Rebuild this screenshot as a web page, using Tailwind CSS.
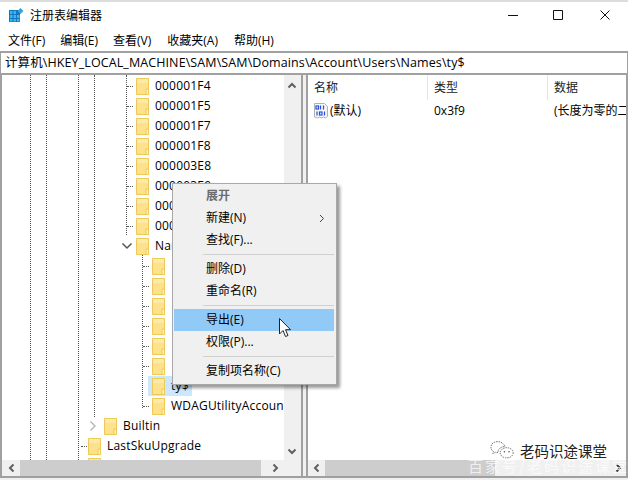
<!DOCTYPE html>
<html lang="zh">
<head>
<meta charset="utf-8">
<script src="https://cdn.jsdelivr.net/npm/@tailwindcss/browser@4"></script>
</head>
<body class="w-[628px] h-[480px] overflow-hidden bg-white text-[12px] text-black font-['Open_Sans','Noto_Sans_CJK_SC',sans-serif]">
<svg class="hidden"><defs>
<symbol id="f" viewBox="0 0 13 17"><path d="M.5.5h12v16H.5z" fill="#fde18d" stroke="#eec955"/><path d="M1 1h11v4H1z" fill="#fdeaa9"/><path d="M10 11h2.500v5.500H10z" fill="#fff1bd" stroke="#eec955"/></symbol>
</defs></svg>
<div class="relative w-[628px] h-[480px] flex flex-col bg-[#f0f0f0] border-t-2 border-[#dcdcdc]">
  <!-- title bar -->
  <div class="h-[28px] bg-white flex items-center shrink-0">
    <svg class="ml-[9px] mt-[-1px]" width="15" height="15" viewBox="0 0 15 15">
      <path d="M0 2h11v12H0z" fill="#1576b8"/>
      <path d="M1 3h2.500v3H1zM4.500 3H7v3H4.500zM1 7h2.500v3H1zM4.500 7H7v3H4.500zM8 7h2.500v3H8zM1 11h2.500v2.500H1zM4.500 11H7v2.500H4.500zM8 11h2.500v2.500H8z" fill="#35b7f3"/>
      <path d="M11.500 0l3 3-3 3-3-3z" fill="#35a5e0"/>
    </svg>
    <span class="ml-[6px] text-[12px]">注册表编辑器</span>
    <div class="ml-auto flex items-center mt-[-2px]">
      <svg width="10" height="10" viewBox="0 0 10 10" class="mr-[35px]"><path d="M0 5.500h10" stroke="#111"/></svg>
      <svg width="10" height="10" viewBox="0 0 10 10" class="mr-[37px]"><path d="M.5.500h9v9h-9z" fill="none" stroke="#111"/></svg>
      <svg width="10" height="10" viewBox="0 0 10 10" class="mr-[18px]"><path d="M.5.500l9 9M9.500.500l-9 9" stroke="#111"/></svg>
    </div>
  </div>
  <!-- menu -->
  <div class="h-[21px] bg-white flex items-center pl-[8px] pt-[1px] gap-[15px] shrink-0 text-[12px]">
    <span>文件(F)</span><span>编辑(E)</span><span>查看(V)</span><span class="ml-[1px]">收藏夹(A)</span><span class="ml-[1px]">帮助(H)</span>
  </div>
  <!-- address -->
  <div class="h-[24px] bg-white border-2 border-[#a0a0a0] border-l-[1px] border-r-[1px] flex items-center pl-[4px] pt-[1px] shrink-0 text-[12.500px] tracking-[0.1px] whitespace-nowrap">计算机\HKEY_LOCAL_MACHINE\SAM\SAM\Domains\Account\Users\Names\ty$</div>
  <!-- panes -->
  <div class="flex-1 flex min-h-0 mb-[2px] border-b-[2px] border-[#a0a0a0] border-l-[2px] border-r-[2px]">
    <!-- left -->
    <div class="w-[301px] flex flex-col shrink-0 border-r-[2px] border-[#a0a0a0]">
      <div class="flex-1 min-h-0 flex">
        <div class="relative flex-1 bg-white overflow-hidden text-[12px] tracking-[0.2px]">
          <div class="absolute left-[28px] top-0 bottom-0 border-l border-dotted border-[#555]"></div>
          <div class="absolute left-[44px] top-0 bottom-0 border-l border-dotted border-[#555]"></div>
          <div class="absolute left-[76px] top-0 bottom-0 border-l border-dotted border-[#555]"></div>
          <div class="absolute left-[92px] top-0 h-[342px] border-l border-dotted border-[#555]"></div>
          <div class="absolute left-[124px] top-0 h-[160px] border-l border-dotted border-[#555]"></div>
          <div class="absolute left-[140px] top-[170px] h-[163px] border-l border-dotted border-[#555]"></div>
          <div class="flex flex-col pt-[1px] leading-[20px]">
            <div class="h-[20px] flex items-center pl-[128px] relative"><i class="w-[6px] ml-[-3px] mr-[3px] border-t border-dotted border-[#555]"></i><svg class="w-[13px] h-[17px]"><use href="#f"/></svg><span class="ml-[6px]">000001F4</span></div>
            <div class="h-[20px] flex items-center pl-[128px]"><i class="w-[6px] ml-[-3px] mr-[3px] border-t border-dotted border-[#555]"></i><svg class="w-[13px] h-[17px]"><use href="#f"/></svg><span class="ml-[6px]">000001F5</span></div>
            <div class="h-[20px] flex items-center pl-[128px]"><i class="w-[6px] ml-[-3px] mr-[3px] border-t border-dotted border-[#555]"></i><svg class="w-[13px] h-[17px]"><use href="#f"/></svg><span class="ml-[6px]">000001F7</span></div>
            <div class="h-[20px] flex items-center pl-[128px]"><i class="w-[6px] ml-[-3px] mr-[3px] border-t border-dotted border-[#555]"></i><svg class="w-[13px] h-[17px]"><use href="#f"/></svg><span class="ml-[6px]">000001F8</span></div>
            <div class="h-[20px] flex items-center pl-[128px]"><i class="w-[6px] ml-[-3px] mr-[3px] border-t border-dotted border-[#555]"></i><svg class="w-[13px] h-[17px]"><use href="#f"/></svg><span class="ml-[6px]">000003E8</span></div>
            <div class="h-[20px] flex items-center pl-[128px]"><i class="w-[6px] ml-[-3px] mr-[3px] border-t border-dotted border-[#555]"></i><svg class="w-[13px] h-[17px]"><use href="#f"/></svg><span class="ml-[6px]">000003E9</span></div>
            <div class="h-[20px] flex items-center pl-[128px]"><i class="w-[6px] ml-[-3px] mr-[3px] border-t border-dotted border-[#555]"></i><svg class="w-[13px] h-[17px]"><use href="#f"/></svg><span class="ml-[6px]">000003EA</span></div>
            <div class="h-[20px] flex items-center pl-[128px]"><i class="w-[6px] ml-[-3px] mr-[3px] border-t border-dotted border-[#555]"></i><svg class="w-[13px] h-[17px]"><use href="#f"/></svg><span class="ml-[6px]">000003EB</span></div>
            <div class="h-[20px] flex items-center pl-[128px] relative"><svg class="absolute left-[119px] top-[6px]" width="12" height="8" viewBox="0 0 12 8"><path d="M1.500 1.500L6 6l4.500-4.500" fill="none" stroke="#555" stroke-width="1.500"/></svg><svg class="ml-[6px] w-[13px] h-[17px]"><use href="#f"/></svg><span class="ml-[6px]">Names</span></div>
            <div class="h-[20px] flex items-center pl-[144px]"><i class="w-[6px] ml-[-3px] mr-[3px] border-t border-dotted border-[#555]"></i><svg class="w-[13px] h-[17px]"><use href="#f"/></svg></div>
            <div class="h-[20px] flex items-center pl-[144px]"><i class="w-[6px] ml-[-3px] mr-[3px] border-t border-dotted border-[#555]"></i><svg class="w-[13px] h-[17px]"><use href="#f"/></svg></div>
            <div class="h-[20px] flex items-center pl-[144px]"><i class="w-[6px] ml-[-3px] mr-[3px] border-t border-dotted border-[#555]"></i><svg class="w-[13px] h-[17px]"><use href="#f"/></svg></div>
            <div class="h-[20px] flex items-center pl-[144px]"><i class="w-[6px] ml-[-3px] mr-[3px] border-t border-dotted border-[#555]"></i><svg class="w-[13px] h-[17px]"><use href="#f"/></svg></div>
            <div class="h-[20px] flex items-center pl-[144px]"><i class="w-[6px] ml-[-3px] mr-[3px] border-t border-dotted border-[#555]"></i><svg class="w-[13px] h-[17px]"><use href="#f"/></svg></div>
            <div class="h-[20px] flex items-center pl-[144px]"><i class="w-[6px] ml-[-3px] mr-[3px] border-t border-dotted border-[#555]"></i><svg class="w-[13px] h-[17px]"><use href="#f"/></svg></div>
            <div class="h-[20px] flex items-center pl-[144px]"><i class="w-[3px] mr-[0px]"></i><div class="flex items-center h-[20px] bg-[#cce8ff] w-[44px] ml-[-1px] pl-[4px]"><svg class="w-[13px] h-[17px] shrink-0"><use href="#f"/></svg><span class="ml-[6px]">ty$</span></div></div>
            <div class="h-[20px] flex items-center pl-[144px]"><i class="w-[6px] ml-[-3px] mr-[3px] border-t border-dotted border-[#555]"></i><svg class="w-[13px] h-[17px]"><use href="#f"/></svg><span class="ml-[6px] whitespace-nowrap">WDAGUtilityAccoun</span></div>
            <div class="h-[20px] flex items-center pl-[102px] relative"><svg class="absolute left-[87px] top-[4px]" width="8" height="12" viewBox="0 0 8 12"><path d="M1.500 1.500L6 6l-4.500 4.500" fill="none" stroke="#bbb" stroke-width="1.500"/></svg><svg class="w-[13px] h-[17px]"><use href="#f"/></svg><span class="ml-[6px]">Builtin</span></div>
            <div class="h-[20px] flex items-center pl-[80px]"><i class="w-[6px] ml-[-1px] mr-[1px] border-t border-dotted border-[#555]"></i><svg class="w-[13px] h-[17px]"><use href="#f"/></svg><span class="ml-[6px]">LastSkuUpgrade</span></div>
            <div class="h-[20px] flex items-center pl-[80px]"><i class="w-[6px] ml-[-1px] mr-[1px]"></i><svg class="w-[13px] h-[17px]"><use href="#f"/></svg></div>
          </div>
        </div>
        <!-- vertical scrollbar -->
        <div class="w-[16px] mr-[1px] bg-[#f0f0f0] flex flex-col items-center justify-between pt-[7px] pb-[5px] shrink-0">
          <svg width="10" height="7" viewBox="0 0 10 7"><path d="M1.500 5.500L5 2l3.500 3.500" fill="none" stroke="#606060" stroke-width="2"/></svg>
          <svg width="10" height="7" viewBox="0 0 10 7"><path d="M1.500 1.500L5 5l3.500-3.500" fill="none" stroke="#606060" stroke-width="2"/></svg>
        </div>
      </div>
      <!-- horizontal scrollbar -->
      <div class="h-[16px] flex items-center bg-[#f0f0f0] shrink-0">
        <div class="w-[18px] flex justify-center"><svg width="7" height="10" viewBox="0 0 7 10"><path d="M5.500 1.500L2 5l3.500 3.500" fill="none" stroke="#606060" stroke-width="2"/></svg></div>
        <div class="w-[241px] h-[16px] bg-[#cdcdcd]"></div>
        <div class="w-[28px] flex justify-center"><svg width="7" height="10" viewBox="0 0 7 10"><path d="M1.500 1.500L5 5 1.500 8.500" fill="none" stroke="#606060" stroke-width="2"/></svg></div>
      </div>
    </div>
    <!-- splitter -->
    <div class="w-[3px] bg-[#f0f0f0] shrink-0"></div>
    <!-- right -->
    <div class="flex-1 min-w-0 flex flex-col border-l-[2px] border-[#a0a0a0]">
      <div class="flex-1 min-h-0 bg-white flex flex-col">
        <div class="h-[25px] flex items-center text-[12px] text-[#222]">
          <div class="w-[120px] h-[25px] shrink-0 pl-[6px] flex items-center border-r border-[#e5e5e5]">名称</div>
          <div class="w-[120px] h-[25px] shrink-0 pl-[6px] flex items-center border-r border-[#e5e5e5]">类型</div>
          <div class="flex-1 pl-[6px] whitespace-nowrap">数据</div>
        </div>
        <div class="h-[20px] flex items-center pt-[1px] text-[12px] whitespace-nowrap overflow-hidden">
          <div class="w-[120px] shrink-0 pl-[6px] flex items-center">
            <svg width="14" height="16" viewBox="0 0 14 16" class="shrink-0"><path d="M.5.500h10l3 3v10l-2 1.500-2-1-2 1-2-1-2 1-3-1z" fill="#f4f6fa" stroke="#b0b0b0"/><g fill="none" stroke="#2a4fd6" stroke-width="1.200"><rect x="2" y="3" width="2.500" height="3"/><path d="M6.500 2.500v4M9.500 2.500v4M3 8.500v4"/><rect x="5.500" y="9" width="2.500" height="3"/><path d="M10.500 8.500v4"/></g></svg>
            <span class="ml-[2px]">(默认)</span>
          </div>
          <div class="w-[120px] shrink-0 pl-[6px]">0x3f9</div>
          <div class="pl-[6px]">(长度为零的二进制值)</div>
        </div>
      </div>
      <div class="relative h-[16px] flex items-center bg-[#f0f0f0] shrink-0">
        <div class="w-[17px] flex justify-center"><svg width="7" height="10" viewBox="0 0 7 10"><path d="M5.500 1.500L2 5l3.500 3.500" fill="none" stroke="#606060" stroke-width="2"/></svg></div>
        <div class="w-[170px] h-[16px] bg-[#cdcdcd]"></div>
        <div class="ml-auto w-[16px] flex justify-center"><svg width="7" height="10" viewBox="0 0 7 10"><path d="M1.500 1.500L5 5 1.500 8.500" fill="none" stroke="#404040" stroke-width="2"/></svg></div>
      </div>
    </div>
  </div>
  <!-- context menu -->
  <div class="absolute left-[172px] top-[181px] w-[165px] h-[202px] bg-[#f0f0f0] border border-[#a8a8a8] shadow-[3px_3px_3px_rgba(0,0,0,0.4)] pt-[1px] px-[1px] text-[12px]">
    <div class="h-[22px] flex items-center pl-[32px] font-bold text-[#6d6d6d]">展开</div>
    <div class="h-[22px] flex items-center pl-[32px] pr-[10px] justify-between"><span>新建(N)</span><svg width="6" height="9" viewBox="0 0 6 9"><path d="M1 1l3.500 3.500L1 8" fill="none" stroke="#444"/></svg></div>
    <div class="h-[22px] flex items-center pl-[32px]">查找(F)...</div>
    <div class="h-px ml-[29px] mr-[1px] my-[3px] bg-[#d0d0d0]"></div>
    <div class="h-[22px] flex items-center pl-[32px]">删除(D)</div>
    <div class="h-[22px] flex items-center pl-[32px]">重命名(R)</div>
    <div class="h-px ml-[29px] mr-[1px] my-[3px] bg-[#d0d0d0]"></div>
    <div class="h-[22px] flex items-center pl-[32px] mr-[1px] bg-[#91c9f7]">导出(E)</div>
    <div class="h-[22px] flex items-center pl-[32px]">权限(P)...</div>
    <div class="h-px ml-[29px] mr-[1px] my-[3px] bg-[#d0d0d0]"></div>
    <div class="h-[22px] flex items-center pl-[32px]">复制项名称(C)</div>
  </div>
  <!-- cursor -->
  <svg class="absolute left-[279px] top-[316px]" width="13" height="20" viewBox="0 0 13 20"><path d="M.5.500v15.500l3.500-3.500 2.500 6 2.500-1-2.500-5.800h5z" fill="#fff" stroke="#222"/></svg>
  <!-- watermark -->
  <div class="absolute left-[490px] top-[438px] flex items-center">
    <svg width="26" height="20" viewBox="0 0 28 20"><g fill="#fff" stroke="#666" stroke-dasharray="1.500 1"><path d="M8 1c-4 0-7 2.500-7 6 0 2 1 3.500 2.500 4.500L3 14l3-1.500c1 .3 1.500.3 2.500.3 0-3.500 3-6.500 7.500-6.500C15 3 12 1 8 1z"/><ellipse cx="18" cy="13" rx="7" ry="5.500"/></g><g fill="#444"><circle cx="15.500" cy="12" r=".8"/><circle cx="20.500" cy="12" r=".8"/></g></svg>
    <span class="ml-[4px] text-[14.500px] leading-[15px] font-['Noto_Sans_CJK_SC',sans-serif] text-[#222] [text-shadow:0_0_1px_#fff,0_0_2px_#fff]">老码识途课堂</span>
  </div>
  <div class="absolute left-[468px] top-[455px] text-[15px] leading-[18px] text-white/70 tracking-[2px] whitespace-nowrap font-['Noto_Sans_CJK_SC',sans-serif]">百家号/老码识途课堂</div>
</div>
</body>
</html>
